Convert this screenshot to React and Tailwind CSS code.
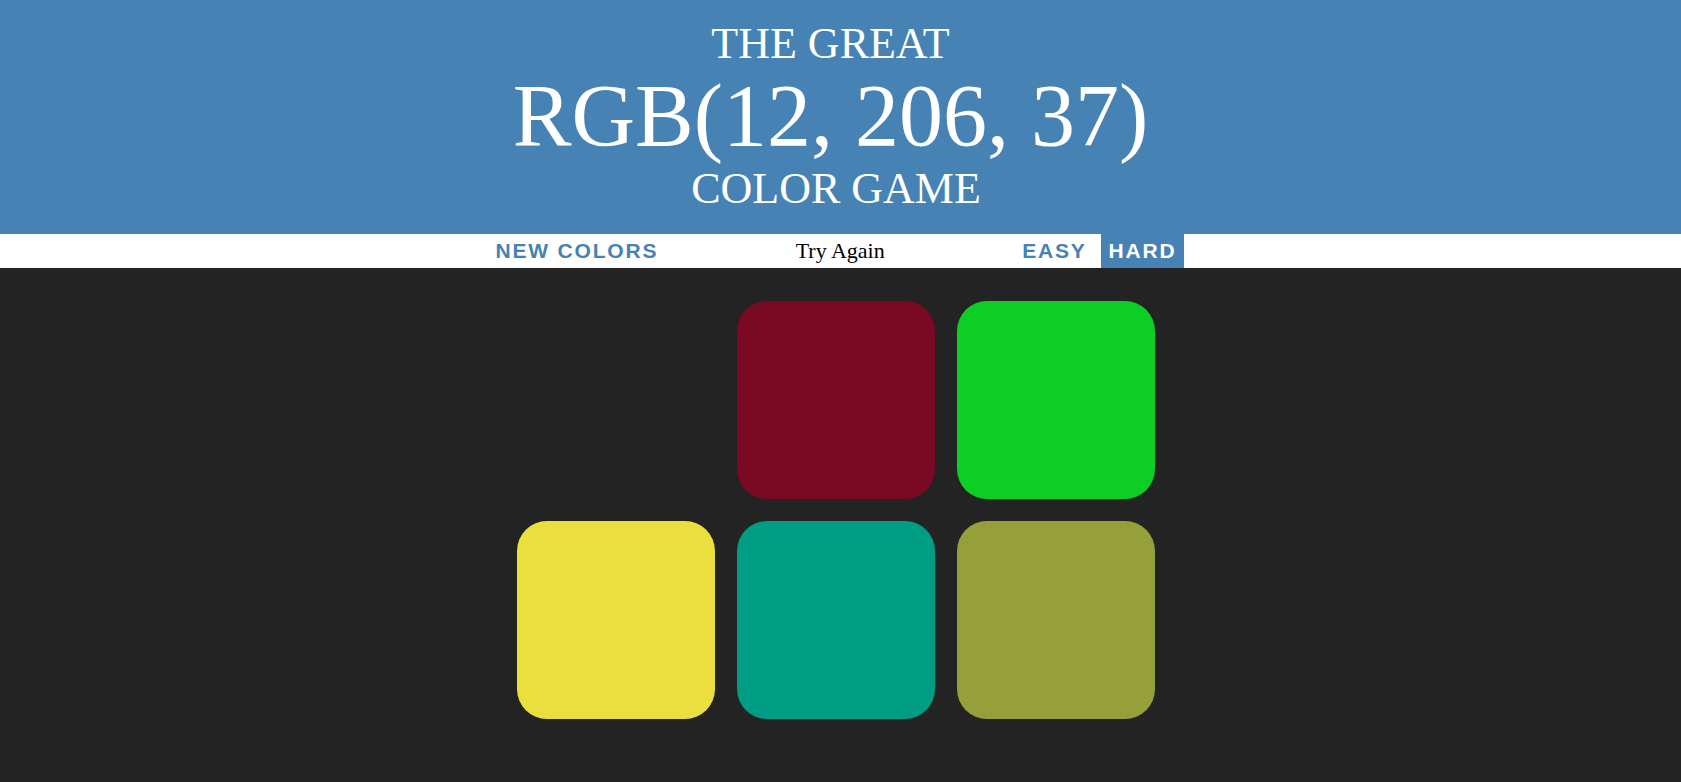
import React from "react";

const squares = [
  "#232323",
  "#7a0923",
  "#0cce25",
  "#eadf3c",
  "#009d85",
  "#96a03b",
];

export default function App() {
  return (
    <div className="min-h-screen bg-[#232323] font-['Liberation_Serif',serif]">
      <h1 className="bg-[#4682b4] pt-[20px] pb-[20px] pr-[9px] text-center font-normal uppercase text-white text-[44px] leading-[1.1]">
        <div className="pr-[11px]">The Great</div>
        <div className="pr-[11px] text-[88px] leading-[1.1]">RGB(12, 206, 37)</div>
        <div>Color Game</div>
      </h1>

      <div className="flex h-[34px] items-center justify-center bg-white pr-[9px] text-black">
        <button className="h-full px-2 font-['Liberation_Sans',sans-serif] text-[21px] font-bold uppercase tracking-[1.8px] text-[#4682b4]">
          New Colors
        </button>
        <span className="ml-[6px] inline-block w-[336px] text-center text-[22px]">
          Try Again
        </span>
        <button className="ml-[6px] h-full px-2 font-['Liberation_Sans',sans-serif] text-[21px] font-bold uppercase tracking-[1.8px] text-[#4682b4]">
          Easy
        </button>
        <button className="ml-[6px] h-full bg-[#4682b4] px-2 font-['Liberation_Sans',sans-serif] text-[21px] font-bold uppercase tracking-[1.8px] text-white">
          Hard
        </button>
      </div>

      <div className="pr-[9px]">
        <div className="mx-auto mt-[22px] grid w-[660px] grid-cols-3">
          {squares.map((color, i) => (
            <div
              key={i}
              className="m-[11px] h-[198px] w-[198px] rounded-[30px]"
              style={{ backgroundColor: color }}
            />
          ))}
        </div>
      </div>
    </div>
  );
}
